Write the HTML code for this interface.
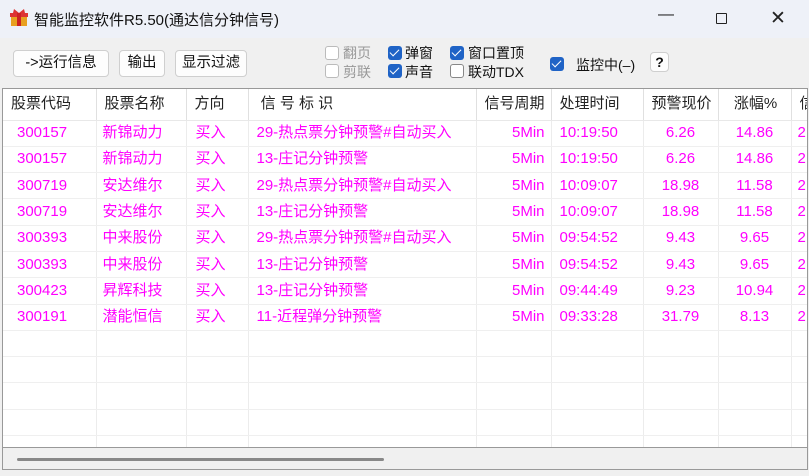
<!DOCTYPE html>
<html><head><meta charset="utf-8"><style>
*{margin:0;padding:0;box-sizing:border-box}
body{width:809px;height:476px;overflow:hidden;background:#f0f0f0;font-family:"Liberation Sans","Noto Sans CJK SC",sans-serif;position:relative}
.title{position:absolute;left:0;top:0;width:809px;height:38px;background:#eef1f8}
.title span{position:absolute;left:34px;top:9px;font-size:15px;color:#111}
.ctl{position:absolute;top:10px;font-size:16px;color:#222}
.btn{position:absolute;top:50px;height:27px;border:1px solid #cfcfcf;border-radius:4px;background:#fdfdfd;font-size:14.5px;line-height:25px;text-align:center;color:#111}
.cb{position:absolute;width:14px;height:14px;border-radius:3px}
.on{background:#1f63c6}
.on::after{content:"";position:absolute;left:4px;top:1px;width:4px;height:8px;border:solid #fff;border-width:0 1.5px 1.5px 0;transform:rotate(45deg)}
.off{border:1px solid #888;background:#fff}
.dis{border:1px solid #bbb;background:#fff}
.lb{position:absolute;font-size:14px;color:#111}
.grid{position:absolute;left:2px;top:88px;width:806px;height:360px;background:#fff;border:1px solid #999;overflow:hidden}
table{border-collapse:collapse;table-layout:fixed;position:absolute;left:0;top:0;width:818px}
td{height:26.3px;line-height:20px;border-right:1px solid #ececec;border-bottom:1px solid #efefef;font-size:15px;color:#f0f;white-space:nowrap;overflow:hidden;padding:0 6px;vertical-align:middle}
tr.h td{height:31px;color:#222;border-bottom:1px solid #e8e8e8;border-right:1px solid #e0e0e0;padding-left:8px}
.c{text-align:center}.r{text-align:right}
.sb{position:absolute;left:2px;top:448px;width:806px;height:22px;background:#f0f0f0;border-left:1px solid #999;border-right:1px solid #999;border-bottom:1px solid #999}
.thumb{position:absolute;left:14px;top:10px;width:367px;height:3px;background:#888;border-radius:2px}
</style></head><body>
<div class="title">
<svg style="position:absolute;left:10px;top:9px" width="18" height="18"><rect x="1" y="7" width="16" height="10" fill="#e8a020"/><rect x="0" y="4" width="18" height="4" fill="#d33"/><rect x="7" y="4" width="4" height="13" fill="#c22"/><path d="M9 4 L4 0 L3 4Z M9 4 L14 0 L15 4Z" fill="#d33"/></svg>
<span>智能监控软件R5.50(通达信分钟信号)</span>
<div class="ctl" style="left:658px;top:6px">—</div>
<div style="position:absolute;left:716px;top:13px;width:11px;height:11px;border:1.3px solid #222;border-radius:1px"></div>
<div class="ctl" style="left:770px;top:7px;font-size:19px">✕</div>
</div>
<div class="btn" style="left:13px;width:96px">-&gt;运行信息</div>
<div class="btn" style="left:119px;width:46px">输出</div>
<div class="btn" style="left:175px;width:72px">显示过滤</div>
<div class="cb dis" style="left:325px;top:46px"></div><div class="lb" style="left:343px;top:43px;color:#999">翻页</div>
<div class="cb dis" style="left:325px;top:64px"></div><div class="lb" style="left:343px;top:62px;color:#999">剪联</div>
<div class="cb on" style="left:388px;top:46px"></div><div class="lb" style="left:405px;top:43px">弹窗</div>
<div class="cb on" style="left:388px;top:64px"></div><div class="lb" style="left:405px;top:62px">声音</div>
<div class="cb on" style="left:450px;top:46px"></div><div class="lb" style="left:468px;top:43px">窗口置顶</div>
<div class="cb off" style="left:450px;top:64px"></div><div class="lb" style="left:468px;top:62px">联动TDX</div>
<div class="cb on" style="left:550px;top:57px"></div><div class="lb" style="left:576px;top:55px">监控中(–)</div>
<div class="btn" style="left:650px;top:52px;width:19px;height:20px;line-height:18px;font-weight:bold;font-size:14px">?</div>
<div class="grid"><table>
<colgroup><col style="width:93px"><col style="width:90px"><col style="width:62px"><col style="width:228px"><col style="width:75px"><col style="width:92px"><col style="width:75px"><col style="width:73px"><col style="width:30px"></colgroup>
<tr class="h"><td>股票代码</td><td>股票名称</td><td>方向</td><td>&nbsp;信 号 标 识</td><td class="r">信号周期</td><td>处理时间</td><td class="c">预警现价</td><td class="c">涨幅%</td><td>信</td></tr>
<tr><td style="padding-left:14px">300157</td><td>新锦动力</td><td style="padding-left:9px">买入</td><td style="padding-left:8px">29-热点票分钟预警#自动买入</td><td class="r">5Min</td><td style="padding-left:8px">10:19:50</td><td class="c">6.26</td><td class="c">14.86</td><td>2</td></tr>
<tr><td style="padding-left:14px">300157</td><td>新锦动力</td><td style="padding-left:9px">买入</td><td style="padding-left:8px">13-庄记分钟预警</td><td class="r">5Min</td><td style="padding-left:8px">10:19:50</td><td class="c">6.26</td><td class="c">14.86</td><td>2</td></tr>
<tr><td style="padding-left:14px">300719</td><td>安达维尔</td><td style="padding-left:9px">买入</td><td style="padding-left:8px">29-热点票分钟预警#自动买入</td><td class="r">5Min</td><td style="padding-left:8px">10:09:07</td><td class="c">18.98</td><td class="c">11.58</td><td>2</td></tr>
<tr><td style="padding-left:14px">300719</td><td>安达维尔</td><td style="padding-left:9px">买入</td><td style="padding-left:8px">13-庄记分钟预警</td><td class="r">5Min</td><td style="padding-left:8px">10:09:07</td><td class="c">18.98</td><td class="c">11.58</td><td>2</td></tr>
<tr><td style="padding-left:14px">300393</td><td>中来股份</td><td style="padding-left:9px">买入</td><td style="padding-left:8px">29-热点票分钟预警#自动买入</td><td class="r">5Min</td><td style="padding-left:8px">09:54:52</td><td class="c">9.43</td><td class="c">9.65</td><td>2</td></tr>
<tr><td style="padding-left:14px">300393</td><td>中来股份</td><td style="padding-left:9px">买入</td><td style="padding-left:8px">13-庄记分钟预警</td><td class="r">5Min</td><td style="padding-left:8px">09:54:52</td><td class="c">9.43</td><td class="c">9.65</td><td>2</td></tr>
<tr><td style="padding-left:14px">300423</td><td>昇辉科技</td><td style="padding-left:9px">买入</td><td style="padding-left:8px">13-庄记分钟预警</td><td class="r">5Min</td><td style="padding-left:8px">09:44:49</td><td class="c">9.23</td><td class="c">10.94</td><td>2</td></tr>
<tr><td style="padding-left:14px">300191</td><td>潜能恒信</td><td style="padding-left:9px">买入</td><td style="padding-left:8px">11-近程弹分钟预警</td><td class="r">5Min</td><td style="padding-left:8px">09:33:28</td><td class="c">31.79</td><td class="c">8.13</td><td>2</td></tr>
<tr><td></td><td></td><td></td><td></td><td></td><td></td><td></td><td></td><td></td></tr>
<tr><td></td><td></td><td></td><td></td><td></td><td></td><td></td><td></td><td></td></tr>
<tr><td></td><td></td><td></td><td></td><td></td><td></td><td></td><td></td><td></td></tr>
<tr><td></td><td></td><td></td><td></td><td></td><td></td><td></td><td></td><td></td></tr>
<tr><td></td><td></td><td></td><td></td><td></td><td></td><td></td><td></td><td></td></tr>
</table></div>
<div class="sb"><div class="thumb"></div></div>
</body></html>
